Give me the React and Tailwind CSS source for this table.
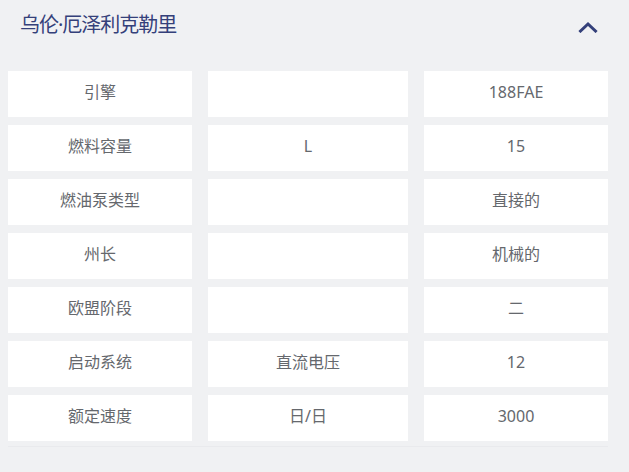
export default function App() {
  const rows = [
    ["引擎", "", "188FAE"],
    ["燃料容量", "L", "15"],
    ["燃油泵类型", "", "直接的"],
    ["州长", "", "机械的"],
    ["欧盟阶段", "", "二"],
    ["启动系统", "直流电压", "12"],
    ["额定速度", "日/日", "3000"],
  ];
  return (
    <div
      className="w-[629px] h-[472px] bg-[#f0f1f3] overflow-hidden"
      style={{ fontFamily: '"Noto Sans", "Noto Sans CJK SC", sans-serif' }}
    >
      <div className="h-[48px] flex items-center justify-between pl-[20px] pr-[31px]">
        <span className="text-[20px] leading-none text-[#34407a] tracking-[-1px] mt-[1px]">乌伦·厄泽利克勒里</span>
        <svg width="20" height="12" viewBox="0 0 20 12" className="mt-[6px]">
          <path d="M2.5 10 L10 3 L17.5 10" fill="none" stroke="#34407a" strokeWidth="3" strokeLinecap="square" />
        </svg>
      </div>
      <div className="mt-[23px] pl-[8px] grid grid-cols-[184px_200px_184px] gap-x-[16px] gap-y-[8px] w-fit">
        {rows.map((r, i) =>
          r.map((c, j) => (
            <div
              key={i + "-" + j}
              className="h-[46px] bg-white flex items-center justify-center pb-[4px] text-[16px] leading-none text-[#65686d]"
            >
              {c}
            </div>
          ))
        )}
      </div>
      <div className="ml-[8px] w-[600px] h-px bg-[#e9eaed] mt-[5px]" />
    </div>
  );
}
